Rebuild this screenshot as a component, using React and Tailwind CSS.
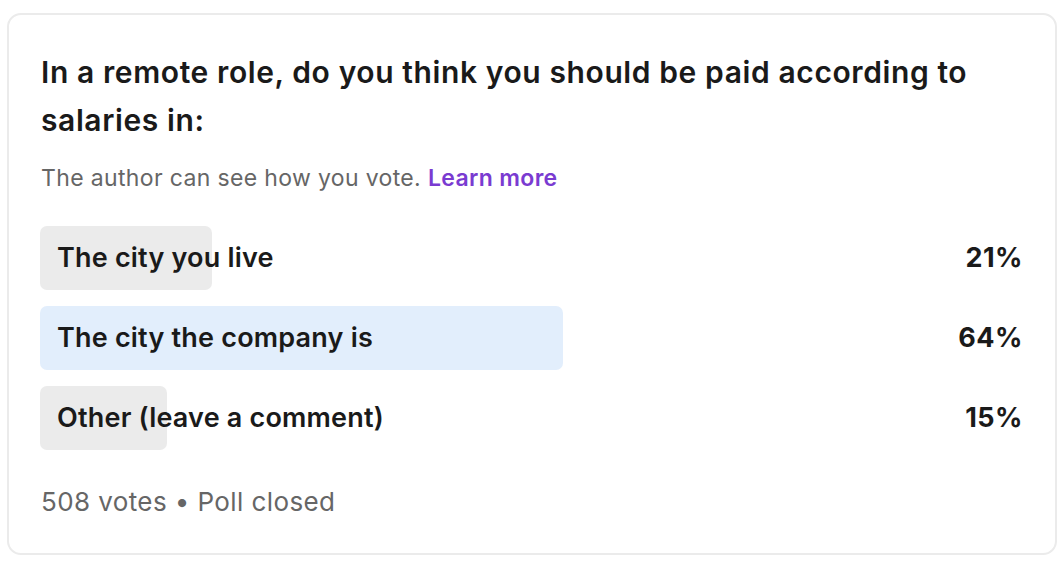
const OPTIONS = [
  { label: 'The city you live', pct: 21, width: 'w-[172px]', bg: 'bg-[#ebebeb]' },
  { label: 'The city the company is', pct: 64, width: 'w-[523px]', bg: 'bg-[#e2eefc]' },
  { label: 'Other (leave a comment)', pct: 15, width: 'w-[127px]', bg: 'bg-[#ebebeb]' },
]

export default function App() {
  return (
    <div className="w-[1064px] h-[568px] bg-white pt-[13px] pl-[7px] font-['Inter','Liberation_Sans',sans-serif]">
      <div className="w-[1050px] h-[542px] rounded-[14px] border-2 border-[#ebebeb] pl-[31px] pr-[32px] pt-[33px]">
        <h1 className="pl-px text-[30px] leading-[48px] font-semibold text-[#1a1a1a] tracking-[0.6px]">
          In a remote role, do you think you should be paid according to salaries in:
        </h1>
        <p className="mt-[18px] pl-px text-[23px] leading-[32px] text-[#666666] tracking-[0.35px]">
          The author can see how you vote. <span className="font-semibold text-[#7a3bd1]">Learn more</span>
        </p>
        <div className="mt-[32px] flex flex-col gap-[16px]">
          {OPTIONS.map((o) => (
            <div key={o.label} className="relative h-[64px] flex items-center justify-between">
              <div className={`absolute left-0 top-0 h-full rounded-[7px] ${o.width} ${o.bg}`} />
              <span className="relative pl-[17px] text-[27px] font-semibold text-[#1a1a1a] tracking-[0.2px]">{o.label}</span>
              <span className="relative text-[27px] font-bold text-[#1a1a1a] tracking-[0.5px]">{o.pct}%</span>
            </div>
          ))}
        </div>
        <p className="mt-[36px] pl-px text-[26px] leading-[32px] text-[#666666] tracking-[0.4px]">508 votes • Poll closed</p>
      </div>
    </div>
  )
}
